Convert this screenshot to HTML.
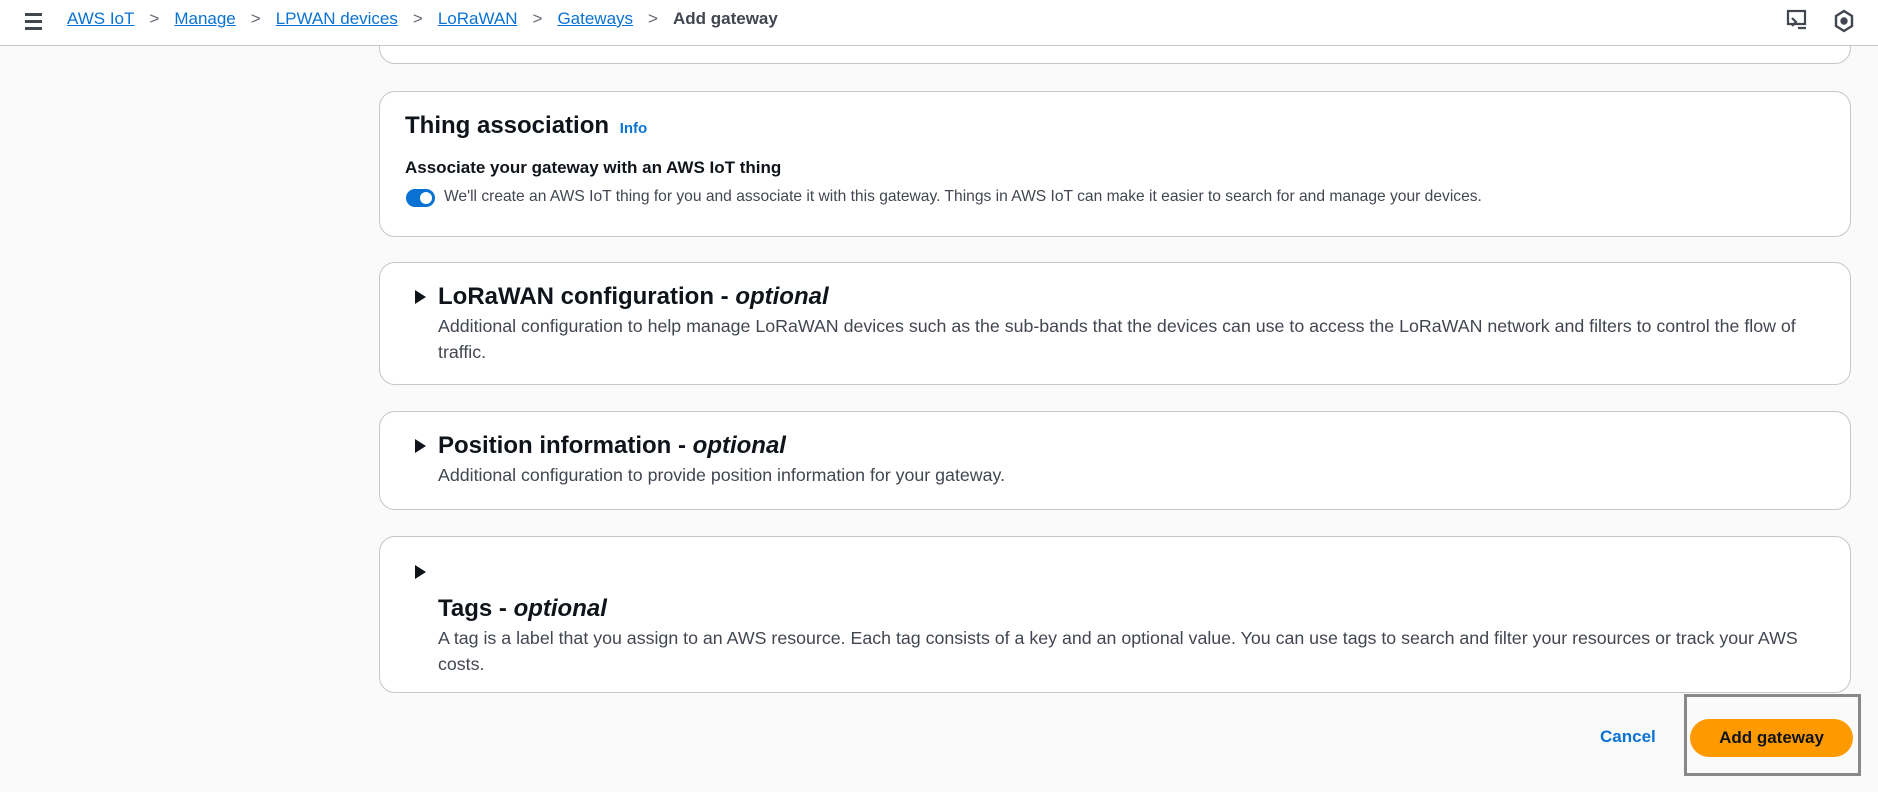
<!DOCTYPE html>
<html><head><meta charset="utf-8"><style>
*{margin:0;padding:0;box-sizing:border-box}
body{width:1878px;height:792px;background:#fafafa;font-family:"Liberation Sans",sans-serif;color:#0f141a;position:relative;overflow:hidden}
.hdr{position:absolute;z-index:5;left:0;top:0;width:1878px;height:46px;background:#fff;border-bottom:1px solid #c6c6cd}
.bc{position:absolute;top:9px;left:67px;font-size:17px;white-space:nowrap}
.bc a{color:#0972d3;text-decoration:underline}
.bc .s{color:#656871;margin:0 15px;font-size:17px}
.bc b{color:#424650}
.card{position:absolute;left:379px;width:1472px;background:#fff;border:1px solid #c6c6cd;border-radius:16px}
.t{position:absolute;font-size:24px;font-weight:bold;white-space:nowrap}
.d{position:absolute;font-size:17.8px;line-height:26px;color:#424650;width:1400px}
.arr{position:absolute;width:0;height:0;border-left:11px solid #0f141a;border-top:7px solid transparent;border-bottom:7px solid transparent}
</style></head><body>
<div class="hdr">
<div style="position:absolute;left:25px;top:13px;width:17px;height:3px;background:#424650;box-shadow:0 7px 0 #424650,0 14px 0 #424650"></div>
<div class="bc"><a>AWS IoT</a><span class="s">&gt;</span><a>Manage</a><span class="s">&gt;</span><a>LPWAN devices</a><span class="s">&gt;</span><a>LoRaWAN</a><span class="s">&gt;</span><a>Gateways</a><span class="s">&gt;</span><b>Add gateway</b></div>
<svg style="position:absolute;left:1786px;top:9px" width="24" height="22" viewBox="0 0 24 22" fill="none" stroke="#424650" stroke-width="2.2"><rect x="2" y="2" width="17" height="13"/><path d="M6 9l4 4-4 4M12 19h8"/></svg>
<svg style="position:absolute;left:1833px;top:9px" width="22" height="24" viewBox="0 0 22 24" fill="none" stroke="#424650" stroke-width="2.4"><path d="M11 2l8 5v10l-8 5-8-5V7z"/><circle cx="11" cy="12" r="2.5" fill="#424650"/></svg>
</div>
<div class="card" style="top:20px;height:44px"></div>
<div class="card" style="top:91px;height:146px">
<div class="t" style="left:25px;top:20px">Thing association <span style="color:#0972d3;font-size:15px;margin-left:4px">Info</span></div>
<div style="position:absolute;left:25px;top:66px;font-size:17px;font-weight:bold">Associate your gateway with an AWS IoT thing</div>
<div style="position:absolute;left:26px;top:97px;width:29px;height:18px;border-radius:9px;background:#0972d3"><div style="position:absolute;right:3px;top:3px;width:12px;height:12px;border-radius:50%;background:#fff"></div></div>
<div style="position:absolute;left:64px;top:96px;font-size:15.6px;color:#424650;white-space:nowrap">We'll create an AWS IoT thing for you and associate it with this gateway. Things in AWS IoT can make it easier to search for and manage your devices.</div>
</div>
<div class="card" style="top:262px;height:123px">
<div class="arr" style="left:35px;top:27px"></div>
<div class="t" style="left:58px;top:20px">LoRaWAN configuration - <i>optional</i></div>
<div class="d" style="left:58px;top:50px">Additional configuration to help manage LoRaWAN devices such as the sub-bands that the devices can use to access the LoRaWAN network and filters to control the flow of traffic.</div>
</div>
<div class="card" style="top:411px;height:99px">
<div class="arr" style="left:35px;top:27px"></div>
<div class="t" style="left:58px;top:20px">Position information - <i>optional</i></div>
<div class="d" style="left:58px;top:50px">Additional configuration to provide position information for your gateway.</div>
</div>
<div class="card" style="top:536px;height:157px">
<div class="arr" style="left:35px;top:28px"></div>
<div class="t" style="left:58px;top:58px">Tags - <i>optional</i></div>
<div class="d" style="left:58px;top:88px">A tag is a label that you assign to an AWS resource. Each tag consists of a key and an optional value. You can use tags to search and filter your resources or track your AWS costs.</div>
</div>
<div style="position:absolute;left:1600px;top:727px;font-size:17px;font-weight:bold;color:#0972d3">Cancel</div>
<div style="position:absolute;left:1684px;top:694px;width:177px;height:82px;border:3px solid #888"></div>
<div style="position:absolute;left:1690px;top:719px;width:163px;height:38px;border-radius:19px;background:#ff9900;font-size:17px;font-weight:bold;text-align:center;line-height:38px">Add gateway</div>
</body></html>
